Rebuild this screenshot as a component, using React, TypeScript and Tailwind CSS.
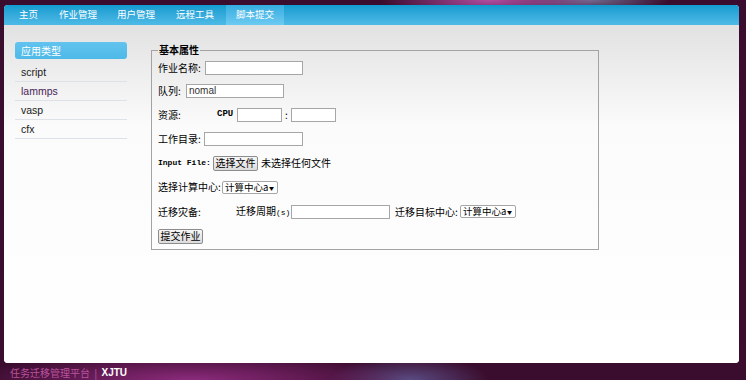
import React from "react";

const cjk = "font-['Noto_Sans_CJK_SC','Noto_Sans',sans-serif]";
const mono = "font-['Liberation_Mono','Noto_Sans_CJK_SC',monospace]";

function TextBox({ w, value }: { w: number; value?: string }) {
  return (
    <div
      className="h-[14px] border border-[#a6a6a6] bg-white pl-[2px] text-[10px] leading-[12px] text-[#333] font-['Liberation_Sans',sans-serif] shrink-0"
      style={{ width: w }}
    >
      {value}
    </div>
  );
}

function Select({ text }: { text: string }) {
  return (
    <div className="flex h-[13px] w-[56px] shrink-0 items-center justify-between whitespace-nowrap rounded-[2px] border border-[#a6a6a6] bg-white pl-[2px] pr-[3px]">
      <span className={`${cjk} text-[9.5px] leading-[11px] text-black`}>{text}</span>
      <span className="text-[5px] leading-none text-black">▼</span>
    </div>
  );
}

function Btn({ text, w }: { text: string; w: number }) {
  return (
    <div
      className={`${cjk} flex h-[15px] shrink-0 items-center justify-center whitespace-nowrap rounded-[2px] border border-[#8c8c8c] bg-gradient-to-b from-[#f7f7f7] to-[#dcdcdc] text-[10px] leading-none text-black`}
      style={{ width: w }}
    >
      {text}
    </div>
  );
}

export default function App() {
  const nav: [string, number][] = [
    ["主页", 21],
    ["作业管理", 20],
    ["用户管理", 21],
    ["远程工具", 12],
  ];
  return (
    <div className="flex h-[380px] w-[746px] flex-col overflow-hidden bg-[radial-gradient(ellipse_110px_20px_at_490px_0px,#b24ea2,transparent),radial-gradient(ellipse_80px_14px_at_590px_0px,#6f6a8e,transparent),radial-gradient(ellipse_220px_28px_at_190px_380px,#8c2a7c,transparent),radial-gradient(ellipse_80px_24px_at_410px_380px,#5a4b82,transparent),linear-gradient(#3a0c2d,#3a0c2d)] pl-[4px] pr-[7px] pt-[5px]">
      <div className="flex h-[358px] flex-col overflow-hidden rounded-[4px] bg-white">
        {/* nav */}
        <div className="flex h-[20px] shrink-0 bg-gradient-to-b from-[#0f9bcf] to-[#4dbae7] pl-[15px]">
          {nav.map(([n, m]) => (
            <div
              key={n}
              className={`${cjk} flex h-full items-center whitespace-nowrap text-[9.5px] leading-none text-white`}
              style={{ marginRight: m }}
            >
              {n}
            </div>
          ))}
          <div
            className={`${cjk} flex h-full w-[58px] items-center justify-center whitespace-nowrap bg-gradient-to-b from-[#34ace0] to-[#6ccaf1] text-[9.5px] leading-none text-white`}
          >
            脚本提交
          </div>
        </div>
        {/* content */}
        <div className="flex flex-1 bg-gradient-to-b from-[#e2e2e2] via-[#fbfbfb] via-30% to-white pl-[11px] pt-[17px]">
          {/* sidebar */}
          <div className="w-[112px] shrink-0">
            <div
              className={`${cjk} flex h-[17px] items-center rounded-[3px] bg-gradient-to-b from-[#62c3ee] to-[#4eb9e8] pl-[6px] text-[10px] leading-none text-white`}
            >
              应用类型
            </div>
            <div className="mt-[4px]">
              {[
                ["script", "text-[#1a1a1a]"],
                ["lammps", "text-[#4a2458]"],
                ["vasp", "text-[#1a1a1a]"],
                ["cfx", "text-[#1a1a1a]"],
              ].map(([t, c]) => (
                <div
                  key={t}
                  className={`flex h-[19px] items-center border-b border-[#dde1e8] pl-[6px] text-[10.5px] leading-none font-['Liberation_Sans',sans-serif] ${c}`}
                >
                  {t}
                </div>
              ))}
            </div>
          </div>
          {/* form */}
          <fieldset className="ml-[24px] mt-[2px] h-[206px] w-[448px] border border-[#a3a3a3] px-[6px] pb-0">
            <legend className={`${cjk} px-[1px] text-[10px] font-semibold leading-[12px] text-black`}>基本属性</legend>
            <div className={`${cjk} flex flex-col whitespace-nowrap text-[10px] leading-none text-black`}>
              <div className="flex h-[23px] items-center pt-[1px]">
                <span className="w-[47px] shrink-0">作业名称:</span>
                <TextBox w={98} />
              </div>
              <div className="flex h-[23px] items-center">
                <span className="w-[28px] shrink-0">队列:</span>
                <TextBox w={98} value="nomal" />
              </div>
              <div className="flex h-[25px] items-center">
                <span className="w-[59px] shrink-0">资源:</span>
                <span className={`${mono} w-[20px] shrink-0 text-[9px] font-bold`}>CPU</span>
                <TextBox w={45} />
                <span className="w-[9px] shrink-0 pl-[3px]">:</span>
                <TextBox w={45} />
              </div>
              <div className="flex h-[24px] items-center">
                <span className="w-[46px] shrink-0">工作目录:</span>
                <TextBox w={99} />
              </div>
              <div className="flex h-[24px] items-center">
                <span className={`${mono} w-[55px] shrink-0 text-[8px] font-bold`}>Input File:</span>
                <Btn text="选择文件" w={45} />
                <span className="ml-[3px]">未选择任何文件</span>
              </div>
              <div className="flex h-[24px] items-center">
                <span className="w-[64px] shrink-0">选择计算中心:</span>
                <Select text="计算中心a" />
              </div>
              <div className="flex h-[25px] items-center">
                <span className="w-[78px] shrink-0">迁移灾备:</span>
                <span className="w-[55px] shrink-0">
                  迁移周期<span className={`${mono} text-[8px]`}>(s)</span>
                </span>
                <TextBox w={99} />
                <span className="ml-[5px] w-[65px] shrink-0">迁移目标中心:</span>
                <Select text="计算中心a" />
              </div>
              <div className="flex h-[24px] items-center">
                <Btn text="提交作业" w={45} />
              </div>
            </div>
          </fieldset>
        </div>
      </div>
      {/* footer */}
      <div className="flex h-[17px] items-center pl-[6px] pt-[2px] text-[10px] leading-none">
        <span className={`${cjk} text-[#b8549c]`}>任务迁移管理平台</span>
        <span className="mx-[3px] text-[#b8549c]">|</span>
        <span className="font-['Liberation_Sans',sans-serif] font-bold text-white">XJTU</span>
      </div>
    </div>
  );
}
